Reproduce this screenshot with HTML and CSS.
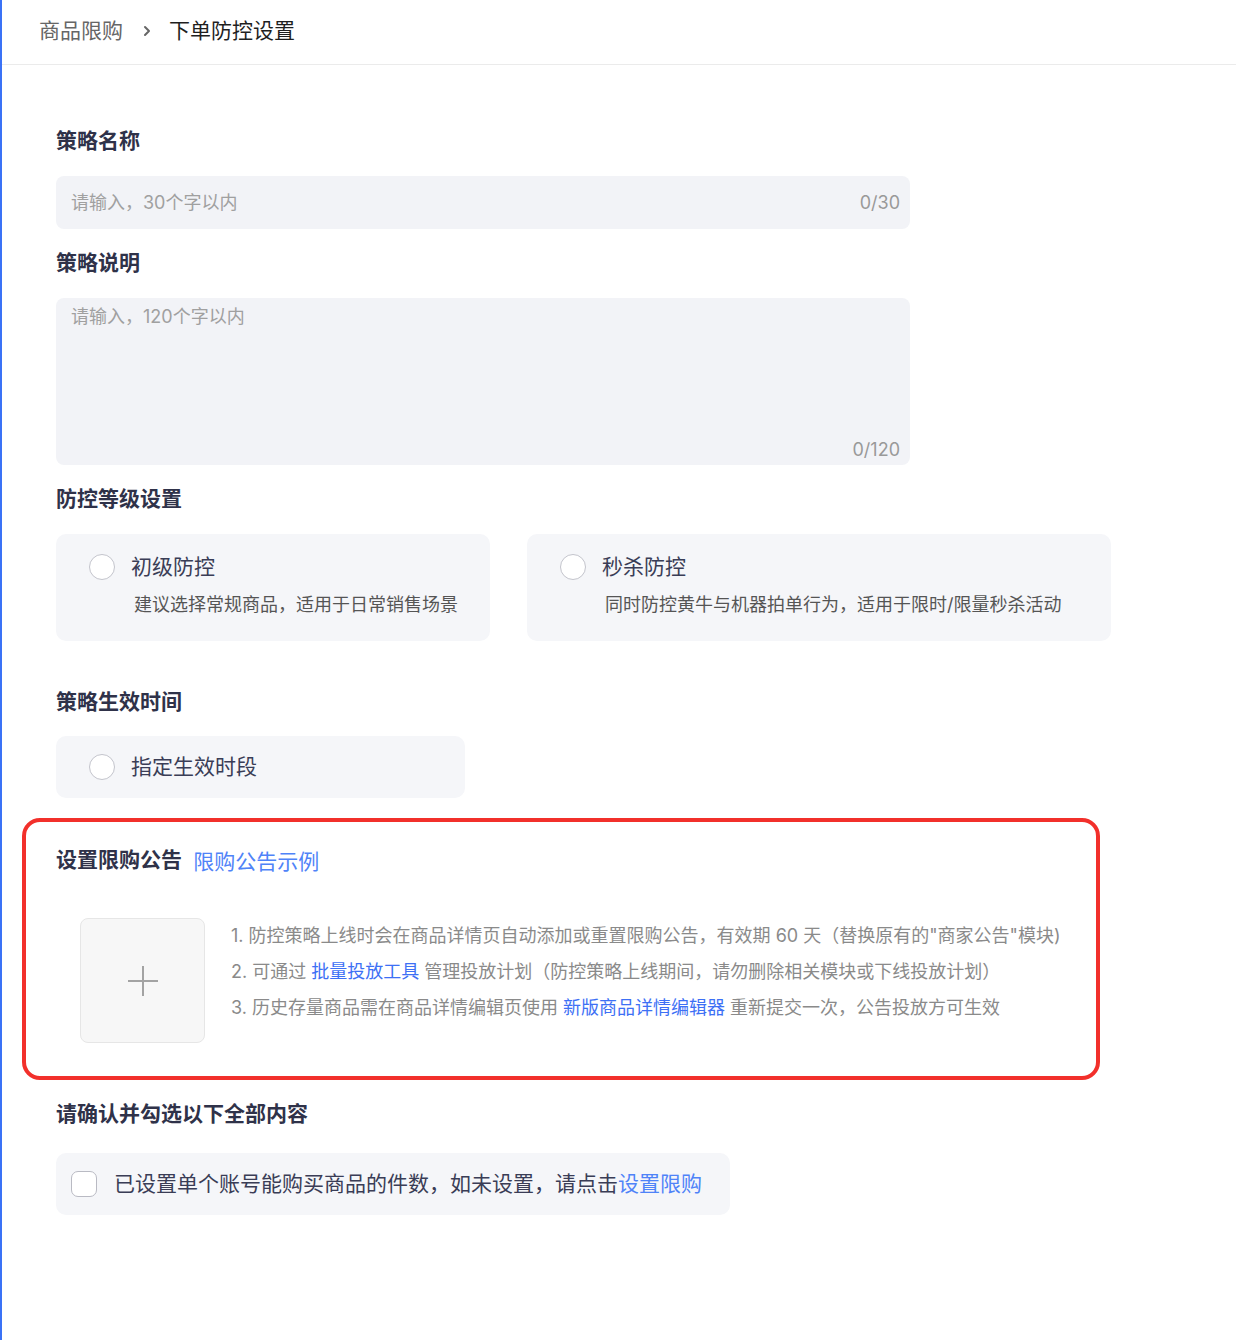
FILE: index.html
```html
<!DOCTYPE html>
<html lang="zh-CN">
<head>
  <meta charset="UTF-8">
  <title>下单防控设置</title>
  <link rel="stylesheet" href="styles.css">
</head>
<body>

<div class="header">
  <span class="crumb">商品限购</span>
  <svg class="crumb-sep" width="12" height="14" viewBox="0 0 12 14"><path d="M4 3l4 4-4 4" fill="none" stroke="#666" stroke-width="2" stroke-linecap="round" stroke-linejoin="round"/></svg>
  <span class="crumb current">下单防控设置</span>
</div>

<div class="main">
  <div class="label">策略名称</div>
  <div class="field">
    <input class="field-input" type="text" placeholder="请输入，30个字以内">
    <span class="count">0/30</span>
  </div>

  <div class="label">策略说明</div>
  <div class="field area">
    <textarea class="field-area" placeholder="请输入，120个字以内"></textarea>
    <span class="count">0/120</span>
  </div>

  <div class="label">防控等级设置</div>
  <div class="options">
    <div class="option level-basic">
      <span class="radio"></span>
      <div class="option-title">初级防控</div>
      <div class="option-desc">建议选择常规商品，适用于日常销售场景</div>
    </div>
    <div class="option level-flash">
      <span class="radio"></span>
      <div class="option-title">秒杀防控</div>
      <div class="option-desc">同时防控黄牛与机器拍单行为，适用于限时/限量秒杀活动</div>
    </div>
  </div>

  <div class="label gap-top">策略生效时间</div>
  <div class="single time">
    <span class="radio"></span>
    <span class="option-title">指定生效时段</span>
  </div>

  <div class="notice">
    <div class="label">设置限购公告 <a class="link head-link">限购公告示例</a></div>
    <div class="notice-body">
      <div class="upload">
        <svg width="34" height="34" viewBox="0 0 34 34"><path d="M17 2v30M2 17h30" stroke="#a3a3a3" stroke-width="2"/></svg>
      </div>
      <ol class="tips">
        <li>1. 防控策略上线时会在商品详情页自动添加或重置限购公告，有效期 60 天（替换原有的"商家公告"模块)</li>
        <li>2. 可通过 <a class="link">批量投放工具</a> 管理投放计划（防控策略上线期间，请勿删除相关模块或下线投放计划）</li>
        <li>3. 历史存量商品需在商品详情编辑页使用 <a class="link">新版商品详情编辑器</a> 重新提交一次，公告投放方可生效</li>
      </ol>
    </div>
  </div>

  <div class="label confirm-label">请确认并勾选以下全部内容</div>
  <div class="single confirm">
    <span class="checkbox"></span>
    <span class="option-title">已设置单个账号能购买商品的件数，如未设置，请点击<a class="link head-link">设置限购</a></span>
  </div>
</div>

</body>
</html>
```

FILE: styles.css
```css
body {
  margin: 0;
  min-height: 1340px;
  border-left: 2px solid #3a72f6;
  background: #fff;
  font-family: "Inter", "Noto Sans CJK SC", sans-serif;
  color: #2f3249;
}

.header {
  height: 65px;
  box-sizing: border-box;
  padding: 16px 0 0 37px;
  border-bottom: 1px solid #ebebeb;
  display: flex;
  align-items: flex-start;
}

.crumb {
  font-size: 21px;
  line-height: 30px;
  color: #666;
}

.crumb.current {
  color: #1f1f1f;
}

.crumb-sep {
  margin: 8px 16px 0 18px;
}

.main {
  padding: 61px 0 80px 54px;
}

.label {
  font-size: 21px;
  line-height: 30px;
  font-weight: 600;
  color: #2f3249;
  margin-bottom: 20px;
}

.gap-top {
  margin-top: 46px;
  margin-bottom: 19px;
}

.field {
  width: 854px;
  height: 53px;
  box-sizing: border-box;
  background: #f2f3f7;
  border-radius: 8px;
  padding: 0 10px 0 15px;
  display: flex;
  align-items: center;
  margin-bottom: 19px;
}

.field-input {
  flex: 1;
  border: none;
  background: transparent;
  outline: none;
  font: inherit;
  font-size: 18px;
  padding: 0;
}

.field-input::placeholder,
.field-area::placeholder {
  color: #a0a0a0;
}

.count {
  font-size: 18px;
  color: #999;
}

.field.area {
  height: 167px;
  flex-direction: column;
  align-items: stretch;
  padding-top: 6px;
  padding-bottom: 3px;
}

.field-area {
  flex: 1;
  border: none;
  background: transparent;
  outline: none;
  resize: none;
  font: inherit;
  font-size: 18px;
  line-height: 26px;
  padding: 0;
}

.field.area .count {
  align-self: flex-end;
  line-height: 24px;
}

.options {
  display: flex;
  gap: 37px;
}

.option {
  box-sizing: border-box;
  height: 107px;
  background: #f5f6f9;
  border-radius: 10px;
  padding: 20px 0 0 33px;
  display: grid;
  grid-template-columns: 26px auto;
  column-gap: 16px;
  row-gap: 13px;
  align-items: center;
  align-content: start;
}

.level-basic {
  width: 434px;
}

.level-flash {
  width: 584px;
}

.radio {
  width: 26px;
  height: 26px;
  box-sizing: border-box;
  border: 1px solid #c3c4cc;
  border-radius: 50%;
  background: #fff;
}

.option-title {
  font-size: 21px;
  line-height: 24px;
  color: #3a3d56;
}

.option-desc {
  grid-column: 2;
  font-size: 18px;
  line-height: 24px;
  color: #555;
  padding-left: 3px;
}

.single {
  height: 62px;
  box-sizing: border-box;
  background: #f5f6f9;
  border-radius: 10px;
  display: flex;
  align-items: center;
  gap: 16px;
}

.time {
  width: 409px;
  padding-left: 33px;
}

.notice {
  width: 1078px;
  box-sizing: border-box;
  margin: 20px 0 19px -34px;
  padding: 23px 0 33px 30px;
  border: 4px solid #f2302b;
  border-radius: 18px;
}

.notice .label {
  margin-bottom: 43px;
}

.link {
  color: #3d70f5;
  text-decoration: none;
  cursor: pointer;
}

.head-link {
  font-weight: 400;
  color: #4f83f8;
  margin-left: 6px;
  position: relative;
  top: 2px;
}

.confirm .head-link {
  margin-left: 0;
  top: 0;
}

.notice-body {
  display: flex;
  gap: 26px;
  padding-left: 24px;
}

.upload {
  width: 125px;
  height: 125px;
  box-sizing: border-box;
  border: 1px solid #e6e6e6;
  border-radius: 8px;
  background: #f7f7f7;
  display: flex;
  align-items: center;
  justify-content: center;
}

.tips {
  list-style: none;
  margin: 0;
  padding: 0;
  font-size: 18px;
  line-height: 36px;
  color: #8a8a8a;
}

.confirm-label {
  margin-bottom: 24px;
}

.confirm {
  width: 674px;
  padding-left: 15px;
  gap: 17px;
}

.checkbox {
  width: 26px;
  height: 26px;
  box-sizing: border-box;
  border: 1px solid #b9bac3;
  border-radius: 7px;
  background: #fff;
}
```
